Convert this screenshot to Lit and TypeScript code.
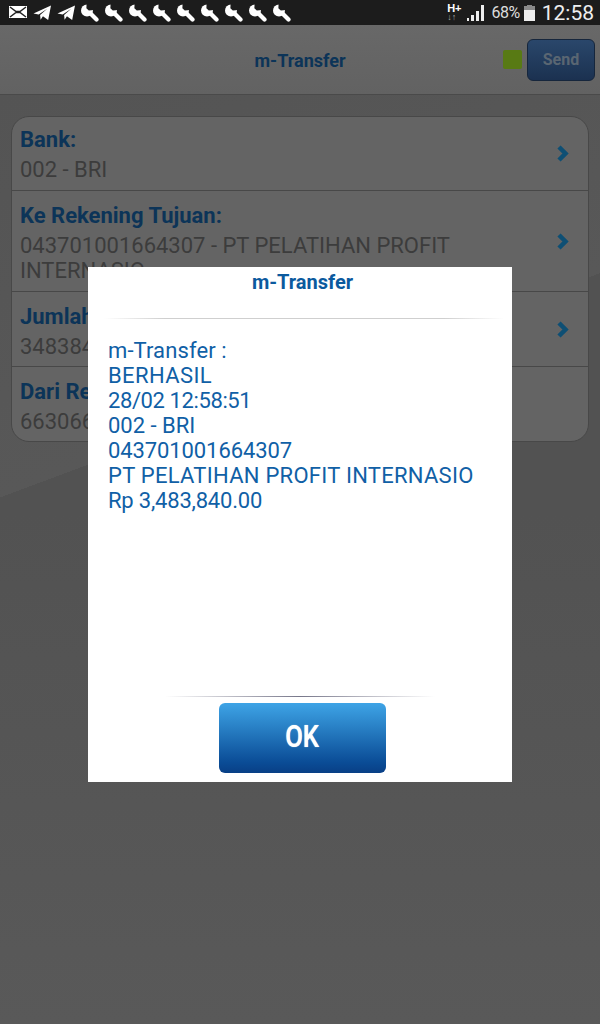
import {LitElement, html, css, svg} from 'lit';
import {customElement} from 'lit/decorators.js';

const wrench = svg`<circle cx="6" cy="6.4" r="6" fill="#fff"/><path d="M6 6 L15.5 15.5" stroke="#fff" stroke-width="4.2" stroke-linecap="round"/><path d="M5.6 -1 L5.4 4.2 L7.8 6.6 L13 6 V-1 Z" fill="#1c1c1c"/>`;
const plane = svg`<path d="M0.5 9 L19 0.5 L16 16 L10.5 12 L8 15.5 L7.5 10.5 L15 4 L6 10 Z" fill="#fff"/>`;

const rows = [
  {label: 'Bank:', value: '002 - BRI', cls: 'r1'},
  {label: 'Ke Rekening Tujuan:', value: '043701001664307 - PT PELATIHAN PROFIT INTERNASIO', cls: 'r2'},
  {label: 'Jumlah Transfer:', value: '3483840', cls: 'r3'},
  {label: 'Dari Rekening:', value: '663066', cls: 'r4', noArrow: true},
];

const lines = [
  {text: 'm-Transfer :', track: 0.1},
  {text: 'BERHASIL', track: 0.4},
  {text: '28/02 12:58:51', track: -0.4},
  {text: '002 - BRI', track: 0},
  {text: '043701001664307', track: -0.1},
  {text: 'PT PELATIHAN PROFIT INTERNASIO', track: 0.27},
  {text: 'Rp 3,483,840.00', track: -0.2},
];

@customElement('app-root')
export class AppRoot extends LitElement {
  static styles = css`
    :host {
      display: block;
      width: 600px;
      height: 1024px;
      position: relative;
      overflow: hidden;
      font-family: Roboto, "Liberation Sans", sans-serif;
      background: #595959;
    }
    .status {
      height: 25px;
      background: #1c1c1c;
      display: flex;
      align-items: center;
      padding: 0 6px 0 9px;
      color: #eee;
    }
    .notifs {
      display: flex;
      align-items: center;
      gap: 6px;
      flex: 1;
    }
    .notifs svg {
      width: 18px;
      height: 18px;
    }
    .notifs svg.env {
      height: 12px;
      margin-top: -1px;
    }
    .net {
      font: 700 11px/9px "Liberation Sans", sans-serif;
      color: #fff;
      margin-right: 5px;
    }
    .net div:last-child {
      color: #aaa;
      font-size: 9px;
    }
    .pct {
      font-size: 16px;
      letter-spacing: -0.5px;
      color: #ddd;
      margin: 0 4px 0 8px;
    }
    .batt {
      margin-right: 7px;
    }
    .time {
      font-size: 21px;
      color: #eee;
    }
    .header {
      height: 69px;
      border-bottom: 1px solid #4a4a4a;
      background: linear-gradient(#686868, #626262);
      display: flex;
      align-items: center;
      padding: 0 5px 0 0;
    }
    .title {
      flex: 1;
      padding: 2px 0 0 97px;
      text-align: center;
      font-size: 18px;
      font-weight: 700;
      color: #0c3458;
    }
    .led {
      width: 19px;
      height: 19px;
      border-radius: 2px;
      background: #587a14;
      margin-right: 5px;
    }
    .send {
      width: 68px;
      height: 42px;
      box-sizing: border-box;
      border: 1px solid #16263c;
      border-radius: 6px;
      background: linear-gradient(#2a476b, #1b3150);
      color: #5a6672;
      font-size: 16px;
      font-weight: 700;
      display: flex;
      align-items: center;
      justify-content: center;
    }
    .body {
      height: 929px;
      box-sizing: border-box;
      padding: 21px 11px 0;
      background:
        linear-gradient(159.5deg, #545454 0, #585858 34.9%, transparent 34.9%),
        linear-gradient(#525252 45%, #595959);
    }
    .card {
      border: 1px solid #484848;
      border-radius: 18px;
      background: #646464;
      height: 326px;
      box-sizing: border-box;
      overflow: hidden;
    }
    .row {
      box-sizing: border-box;
      padding: 12px 24px 0 8px;
      border-bottom: 1px solid #484848;
      position: relative;
    }
    .row:last-child { border-bottom: 0; }
    .r1 { height: 74px; padding-top: 10px; }
    .r2 { height: 101px; }
    .r3 { height: 75px; }
    .label {
      font-size: 22px;
      line-height: 26px;
      font-weight: 700;
      color: #0c3458;
    }
    .value {
      font-size: 22px;
      line-height: 25px;
      color: #3c3c3c;
      margin-top: 4px;
    }
    .chev {
      position: absolute;
      right: 19px;
      width: 12px;
      height: 17px;
      fill: none;
      stroke: #0e4f74;
      stroke-width: 4.5;
    }
    .r1 .chev { top: 28px; }
    .r2 .chev { top: 42px; }
    .r3 .chev { top: 29px; }
    .dialog {
      position: absolute;
      left: 88px;
      top: 267px;
      width: 424px;
      height: 515px;
      background: #fff;
      display: flex;
      flex-direction: column;
      align-items: center;
    }
    .dlg-title {
      height: 51px;
      width: 100%;
      box-sizing: border-box;
      padding-left: 5px;
      text-align: center;
      font-size: 20px;
      line-height: 30px;
      font-weight: 700;
      color: #0b5a9e;
    }
    .rule {
      height: 1px;
      width: 400px;
      flex: none;
      margin-left: 8px;
      background: linear-gradient(90deg, #fff, #cfcfcf 15%, #cfcfcf 85%, #fff);
    }
    .msg {
      flex: 1;
      align-self: stretch;
      padding: 19px 0 0 20px;
      font-size: 22px;
      line-height: 25px;
      color: #1060a6;
    }
    .rule2 {
      height: 1px;
      width: 270px;
      flex: none;
      background: linear-gradient(90deg, #fff, #77778a 50%, #fff);
    }
    .ok {
      width: 167px;
      height: 70px;
      box-sizing: border-box;
      margin: 6px 0 9px 4px;
      border-radius: 6px;
      background: linear-gradient(#3ea4e6, #0a4c96 85%, #083f86);
      color: #fff;
      font-size: 32px;
      font-weight: 500;
      text-shadow: 0 0 1px #fff;
      display: flex;
      align-items: center;
      justify-content: center;
    }
    .ok span {
      display: block;
      margin-top: -4px;
      transform: scaleX(0.8);
    }
  `;

  render() {
    return html`
      <div class="status">
        <div class="notifs">
          <svg class="env" viewBox="0 0 18 12"><rect width="18" height="12" fill="#fff"/><path d="M1 1 L7 5.5 H11 L17 1 M1 11 L7 6.5 H11 L17 11" stroke="#222" stroke-width="1.5" fill="none"/></svg>
          <svg viewBox="0 0 19 17">${plane}</svg>
          <svg viewBox="0 0 19 17">${plane}</svg>
          ${Array.from({length: 9}, () => html`<svg viewBox="0 0 18 18">${wrench}</svg>`)}
        </div>
        <div class="net"><div>H+</div><div>↓↑</div></div>
        <svg viewBox="0 0 17 17" width="17" height="17"><path d="M0 14h2v3H0zM4 11h3v6H4zM9 7h3v10H9zM14 1h3v16h-3z" fill="#eee"/></svg>
        <span class="pct">68%</span>
        <svg class="batt" viewBox="0 0 11 16" width="11" height="16"><path d="M3 0h5v1h3v4H0V1h3z" fill="#8a8a8a"/><path d="M0 5h11v11H0z" fill="#eee"/></svg>
        <span class="time">12:58</span>
      </div>
      <div class="header">
        <div class="title">m-Transfer</div>
        <div class="led"></div>
        <div class="send">Send</div>
      </div>
      <div class="body">
        <div class="card">
          ${rows.map(
            (r) => html`<div class="row ${r.cls}">
              <div class="label">${r.label}</div>
              <div class="value">${r.value}</div>
              ${r.noArrow
                ? ''
                : html`<svg class="chev" viewBox="0 0 12 17"><path d="M2 2 L8.5 8.5 L2 15"/></svg>`}
            </div>`
          )}
        </div>
      </div>
      <div class="dialog">
        <div class="dlg-title">m-Transfer</div>
        <div class="rule"></div>
        <div class="msg">
          ${lines.map((l) => html`<div style="letter-spacing:${l.track}px">${l.text}</div>`)}
        </div>
        <div class="rule2"></div>
        <div class="ok"><span>OK</span></div>
      </div>
    `;
  }
}
